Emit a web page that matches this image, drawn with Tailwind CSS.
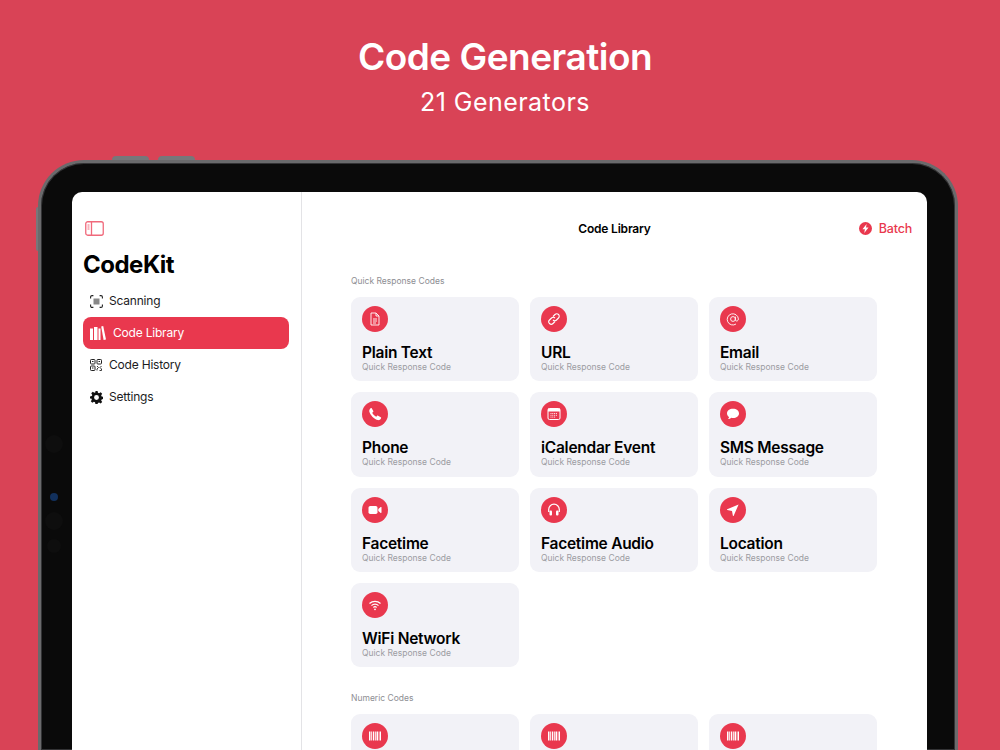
<!DOCTYPE html>
<html lang="en">
  <head>
    <meta charset="UTF-8" />
    <meta name="viewport" content="width=device-width, initial-scale=1.0" />
    <title>CodeKit - Code Generation</title>
    <script src="https://cdn.jsdelivr.net/npm/@tailwindcss/browser@4"></script>
  </head>
  <body class="w-[1000px] h-[750px] overflow-hidden bg-[#d94356] font-['Inter',sans-serif] text-black">
    <!-- heading -->
    <header class="h-[160px] pl-[10px] pt-[33px] text-center text-white">
      <h1 class="text-[37px] leading-[48px] font-semibold tracking-[-0.5px]">Code Generation</h1>
      <p class="mt-[6px] text-[25px] leading-[30px] tracking-[0.45px]">21 Generators</p>
    </header>

    <!-- device -->
    <div class="relative ml-[38px] w-[920px] h-[590px] rounded-t-[46px] bg-[#0a0a0a] border-t-[3px] border-x-[3px] border-[#6a6a6c] shadow-[inset_0_0_0_1px_#333335] pl-[31px] pr-[28px] pt-[29px]">
      <div class="absolute left-[71px] top-[-7px] w-[37px] h-[4px] rounded-t-sm bg-[#77777a]"></div>
      <div class="absolute left-[117px] top-[-7px] w-[37px] h-[4px] rounded-t-sm bg-[#77777a]"></div>
      <div class="absolute left-[-5px] top-[44px] w-[2px] h-[44px] rounded-l-sm bg-[#77777a]"></div>
      <div class="absolute left-[4px] top-[272px] w-[18px] h-[18px] rounded-full bg-[#0e0e0e]"></div>
      <div class="absolute left-[9px] top-[330px] w-[8px] h-[8px] rounded-full bg-[#12305c]"></div>
      <div class="absolute left-[4px] top-[349px] w-[18px] h-[18px] rounded-full bg-[#0e0e0e]"></div>
      <div class="absolute left-[6px] top-[376px] w-[14px] h-[14px] rounded-full bg-[#0e0e0e]"></div>

      <!-- screen -->
      <div class="flex h-[558px] rounded-t-[10px] overflow-hidden bg-white">
        <aside class="w-[230px] shrink-0 border-r border-[#e3e3e6] px-[11px] pt-[29px]">
          <svg class="ml-[2px] w-[19px] h-[15px] text-[#f0697b]" viewBox="0 0 19 15" fill="none" stroke="currentColor">
            <rect x="0.75" y="0.75" width="17.5" height="13.5" rx="2" stroke-width="1.3" />
            <path d="M6.5 1v13" stroke-width="1.3" />
            <path d="M2.5 4h2M2.5 6h2M2.5 8h2" stroke-width="1" />
          </svg>
          <h2 class="mt-[12px] text-[24px] leading-[34px] font-bold tracking-[-0.5px]">CodeKit</h2>
          <nav class="mt-[3px] w-[206px] text-[12px] tracking-[-0.2px] text-[#1c1c1e]">
            <a class="flex items-center h-[32px] pl-[7px] gap-[6px]">
              <svg class="w-[13px] h-[13px]" viewBox="0 0 13 13" fill="none" stroke="#222" stroke-width="1.1">
                <path d="M.6 3.4V2A1.4 1.4 0 0 1 2 .6h1.4M9.6.6H11A1.4 1.4 0 0 1 12.4 2v1.4M12.4 9.6V11A1.4 1.4 0 0 1 11 12.4H9.6M3.4 12.4H2A1.4 1.4 0 0 1 .6 11V9.6" />
                <rect x="3.5" y="3.5" width="6" height="6" fill="#888" stroke="none" />
              </svg>
              <span>Scanning</span>
            </a>
            <a class="flex items-center h-[32px] pl-[7px] gap-[7px] rounded-lg bg-[#e9384e] text-white">
              <svg class="w-[16px] h-[14px]" viewBox="0 0 16 14" fill="#fff">
                <rect x="0" y="2.5" width="3" height="11.5" />
                <rect x="4" y="1" width="3.5" height="13" />
                <rect x="8.5" y="2.5" width="2" height="11.5" />
                <path d="M11.2.6l2-.6L16 13.4l-2.400.6z" />
              </svg>
              <span>Code Library</span>
            </a>
            <a class="flex items-center h-[32px] pl-[7px] gap-[7px]">
              <svg class="w-[12px] h-[12px]" viewBox="0 0 12 12" fill="none" stroke="#222">
                <rect x=".5" y=".5" width="4.5" height="4.5" rx=".8" />
                <rect x="7" y=".5" width="4.5" height="4.5" rx=".8" />
                <rect x=".5" y="7" width="4.5" height="4.5" rx=".8" />
                <path d="M2 2.500h1.500M8.500 2.500H10M2 9h1.500" stroke-width="1.2" />
                <path d="M7 7l1.500 1.500L7 10v1.500M11.500 7L10 8.500l1.500 1.500v1.500H9.500" stroke-width=".9" />
              </svg>
              <span>Code History</span>
            </a>
            <a class="flex items-center h-[32px] pl-[7px] gap-[6px]">
              <svg class="w-[13px] h-[13px]" viewBox="0 0 24 24" fill="#111">
                <path fill-rule="evenodd" d="M10 0h4l.7 3.300 2.100.9L19.700 2.300l2.800 2.800-1.900 2.900.9 2.100 3.300.7v4l-3.300.7-.9 2.100 1.900 2.900-2.800 2.800-2.900-1.900-2.100.9L14 24h-4l-.7-3.300-2.100-.9-2.900 1.900-2.800-2.800 1.900-2.900-.9-2.100L0 14v-4l3.300-.7.9-2.100-1.900-2.900 2.800-2.800 2.900 1.900 2.100-.9zM12 7.500a4.500 4.500 0 1 0 0 9 4.500 4.500 0 0 0 0-9z" />
              </svg>
              <span>Settings</span>
            </a>
          </nav>
        </aside>

        <main class="flex-1 min-w-0">
          <div class="relative flex items-center justify-end h-[73px] pr-[15px]">
            <h3 class="absolute inset-x-0 text-center text-[12px] font-semibold tracking-[-0.2px]">Code Library</h3>
            <button class="relative flex items-center gap-[7px] text-[12.5px] leading-[16px] font-medium tracking-[-0.2px] text-[#e9384e]">
              <svg class="w-[13px] h-[13px]" viewBox="0 0 13 13">
                <circle cx="6.5" cy="6.5" r="6.5" fill="#e9384e" />
                <path d="M7.6 2L3.5 7.300h2.400L5.300 11l4.200-5.400H7z" fill="#fff" />
              </svg>
              <span>Batch</span>
            </button>
          </div>

          <div class="pl-[49px] pr-[50px] pt-[9px]">
            <p class="h-[14px] text-[8.5px] leading-[14px] text-[#8e8e93]">Quick Response Codes</p>
            <div class="mt-[9.3px] grid grid-cols-3 gap-[11px]">
              <div class="h-[84.17px] rounded-[9px] bg-[#f2f2f7] px-[11px] pt-[9px]">
                <div class="flex items-center justify-center w-[26px] h-[26px] rounded-full bg-[#e9384e]">
                  <svg class="w-[14px] h-[14px]" viewBox="0 0 14 14" fill="none" stroke="#fff" stroke-width=".9">
                    <path d="M3 1h5l3 3v9H3zM8 1v3h3M5 7h4M5 9h4M5 11h3" />
                  </svg>
                </div>
                <p class="mt-[11px] text-[15.5px] leading-[19px] font-semibold tracking-[-0.26px]">Plain Text</p>
                <p class="text-[8.5px] leading-[10px] text-[#9c9ca2]">Quick Response Code</p>
              </div>
              <div class="h-[84.17px] rounded-[9px] bg-[#f2f2f7] px-[11px] pt-[9px]">
                <div class="flex items-center justify-center w-[26px] h-[26px] rounded-full bg-[#e9384e]">
                  <svg class="w-[14px] h-[14px]" viewBox="0 0 14 14" fill="none" stroke="#fff" stroke-width="1.1">
                    <path d="M6 4.500l2-2a2.400 2.400 0 0 1 3.500 3.500l-2 2a2.400 2.400 0 0 1-3.500 0" />
                    <path d="M8 9.500l-2 2A2.400 2.400 0 0 1 2.500 8l2-2a2.400 2.400 0 0 1 3.500 0" />
                  </svg>
                </div>
                <p class="mt-[11px] text-[15.5px] leading-[19px] font-semibold tracking-[-0.26px]">URL</p>
                <p class="text-[8.5px] leading-[10px] text-[#9c9ca2]">Quick Response Code</p>
              </div>
              <div class="h-[84.17px] rounded-[9px] bg-[#f2f2f7] px-[11px] pt-[9px]">
                <div class="flex items-center justify-center w-[26px] h-[26px] rounded-full bg-[#e9384e]">
                  <svg class="w-[14px] h-[14px]" viewBox="0 0 14 14" fill="none" stroke="#fff" stroke-width=".9">
                    <circle cx="7" cy="7" r="2.4" />
                    <path d="M9.4 4.600v3.300c0 1.600 3 1.600 3-1A5.600 5.600 0 1 0 10 12" />
                  </svg>
                </div>
                <p class="mt-[11px] text-[15.5px] leading-[19px] font-semibold tracking-[-0.26px]">Email</p>
                <p class="text-[8.5px] leading-[10px] text-[#9c9ca2]">Quick Response Code</p>
              </div>

              <div class="h-[84.17px] rounded-[9px] bg-[#f2f2f7] px-[11px] pt-[9px]">
                <div class="flex items-center justify-center w-[26px] h-[26px] rounded-full bg-[#e9384e]">
                  <svg class="w-[14px] h-[14px]" viewBox="0 0 14 14" fill="#fff">
                    <path d="M3.700 1.200L5.300 3.900c.2.400.1.800-.2 1.100l-.9.800c.7 1.500 2.500 3.300 4 4l.8-.9c.3-.3.700-.4 1.100-.2l2.700 1.600c.4.300.5.800.2 1.200-.8 1.200-1.800 1.800-3 1.600C6.500 12.500 2 8 1.300 4.500c-.2-1.200.3-2.400 1.300-3.300.4-.3.800-.3 1.100 0z" />
                  </svg>
                </div>
                <p class="mt-[11px] text-[15.5px] leading-[19px] font-semibold tracking-[-0.26px]">Phone</p>
                <p class="text-[8.5px] leading-[10px] text-[#9c9ca2]">Quick Response Code</p>
              </div>
              <div class="h-[84.17px] rounded-[9px] bg-[#f2f2f7] px-[11px] pt-[9px]">
                <div class="flex items-center justify-center w-[26px] h-[26px] rounded-full bg-[#e9384e]">
                  <svg class="w-[14px] h-[14px]" viewBox="0 0 14 14" fill="none">
                    <rect x="1" y="1.5" width="12" height="11" rx="1.5" stroke="#fff" />
                    <rect x="1" y="1.5" width="12" height="3" fill="#fff" />
                    <path d="M3.500 6.500h7M3.500 8.300h7M3.500 10.100h5" stroke="#fff" stroke-width=".9" stroke-dasharray="1 .8" />
                  </svg>
                </div>
                <p class="mt-[11px] text-[15.5px] leading-[19px] font-semibold tracking-[-0.26px]">iCalendar Event</p>
                <p class="text-[8.5px] leading-[10px] text-[#9c9ca2]">Quick Response Code</p>
              </div>
              <div class="h-[84.17px] rounded-[9px] bg-[#f2f2f7] px-[11px] pt-[9px]">
                <div class="flex items-center justify-center w-[26px] h-[26px] rounded-full bg-[#e9384e]">
                  <svg class="w-[14px] h-[14px]" viewBox="0 0 14 14" fill="#fff">
                    <path d="M7 1.800c3.500 0 6 2 6 4.600S10.500 11 7 11c-.6 0-1.200-.1-1.700-.2-.8.7-2 1.200-3.300 1.300.6-.6 1-1.400 1.100-2.100C1.900 9.200 1 7.900 1 6.400 1 3.800 3.500 1.800 7 1.800z" />
                  </svg>
                </div>
                <p class="mt-[11px] text-[15.5px] leading-[19px] font-semibold tracking-[-0.26px]">SMS Message</p>
                <p class="text-[8.5px] leading-[10px] text-[#9c9ca2]">Quick Response Code</p>
              </div>

              <div class="h-[84.17px] rounded-[9px] bg-[#f2f2f7] px-[11px] pt-[9px]">
                <div class="flex items-center justify-center w-[26px] h-[26px] rounded-full bg-[#e9384e]">
                  <svg class="w-[14px] h-[14px]" viewBox="0 0 14 14" fill="#fff">
                    <rect x=".5" y="3" width="9" height="8" rx="1.8" />
                    <path d="M10.300 6l2.400-2c.3-.2.800 0 .8.400v5.200c0 .4-.5.600-.8.400l-2.400-2z" />
                  </svg>
                </div>
                <p class="mt-[11px] text-[15.5px] leading-[19px] font-semibold tracking-[-0.26px]">Facetime</p>
                <p class="text-[8.5px] leading-[10px] text-[#9c9ca2]">Quick Response Code</p>
              </div>
              <div class="h-[84.17px] rounded-[9px] bg-[#f2f2f7] px-[11px] pt-[9px]">
                <div class="flex items-center justify-center w-[26px] h-[26px] rounded-full bg-[#e9384e]">
                  <svg class="w-[14px] h-[14px]" viewBox="0 0 14 14" fill="none">
                    <path d="M1.700 9V6.500a5.300 5.300 0 0 1 10.600 0V9" stroke="#fff" stroke-width="1.2" />
                    <rect x="2.5" y="7.500" width="2.500" height="5" rx="1" fill="#fff" />
                    <rect x="9" y="7.500" width="2.500" height="5" rx="1" fill="#fff" />
                  </svg>
                </div>
                <p class="mt-[11px] text-[15.5px] leading-[19px] font-semibold tracking-[-0.26px]">Facetime Audio</p>
                <p class="text-[8.5px] leading-[10px] text-[#9c9ca2]">Quick Response Code</p>
              </div>
              <div class="h-[84.17px] rounded-[9px] bg-[#f2f2f7] px-[11px] pt-[9px]">
                <div class="flex items-center justify-center w-[26px] h-[26px] rounded-full bg-[#e9384e]">
                  <svg class="w-[14px] h-[14px]" viewBox="0 0 14 14" fill="#fff">
                    <path d="M12.600 1.400L7.700 12.800c-.2.400-.7.300-.8-.1L6 8 1.300 7.100c-.4-.1-.5-.6-.1-.8z" />
                  </svg>
                </div>
                <p class="mt-[11px] text-[15.5px] leading-[19px] font-semibold tracking-[-0.26px]">Location</p>
                <p class="text-[8.5px] leading-[10px] text-[#9c9ca2]">Quick Response Code</p>
              </div>

              <div class="h-[84.17px] rounded-[9px] bg-[#f2f2f7] px-[11px] pt-[9px]">
                <div class="flex items-center justify-center w-[26px] h-[26px] rounded-full bg-[#e9384e]">
                  <svg class="w-[14px] h-[14px]" viewBox="0 0 14 14" fill="none" stroke="#fff" stroke-width="1.2">
                    <path d="M1.500 5.500a8 8 0 0 1 11 0M3.500 7.600a5 5 0 0 1 7 0M5.400 9.500a2.300 2.300 0 0 1 3.200 0" />
                    <circle cx="7" cy="11.300" r=".9" fill="#fff" stroke="none" />
                  </svg>
                </div>
                <p class="mt-[11px] text-[15.5px] leading-[19px] font-semibold tracking-[-0.26px]">WiFi Network</p>
                <p class="text-[8.5px] leading-[10px] text-[#9c9ca2]">Quick Response Code</p>
              </div>
            </div>

            <p class="mt-[24px] h-[14px] text-[8.5px] leading-[14px] text-[#8e8e93]">Numeric Codes</p>
            <div class="mt-[9px] grid grid-cols-3 gap-x-[11px]">
              <div class="h-[84.17px] rounded-[9px] bg-[#f2f2f7] px-[11px] pt-[9px]">
                <div class="flex items-center justify-center w-[26px] h-[26px] rounded-full bg-[#e9384e]">
                  <svg class="w-[14px] h-[14px]" viewBox="0 0 14 14" fill="#fff">
                    <path d="M1 2.500h1.500v9H1zM3.200 2.500h.8v9h-.8zM4.800 2.500h1.500v9H4.800zM7 2.500h.8v9H7zM8.500 2.500H10v9H8.500zM10.700 2.500h.8v9h-.8zM12 2.500h1v9h-1z" />
                  </svg>
                </div>
              </div>
              <div class="h-[84.17px] rounded-[9px] bg-[#f2f2f7] px-[11px] pt-[9px]">
                <div class="flex items-center justify-center w-[26px] h-[26px] rounded-full bg-[#e9384e]">
                  <svg class="w-[14px] h-[14px]" viewBox="0 0 14 14" fill="#fff">
                    <path d="M1 2.500h1.500v9H1zM3.200 2.500h.8v9h-.8zM4.800 2.500h1.500v9H4.800zM7 2.500h.8v9H7zM8.500 2.500H10v9H8.500zM10.700 2.500h.8v9h-.8zM12 2.500h1v9h-1z" />
                  </svg>
                </div>
              </div>
              <div class="h-[84.17px] rounded-[9px] bg-[#f2f2f7] px-[11px] pt-[9px]">
                <div class="flex items-center justify-center w-[26px] h-[26px] rounded-full bg-[#e9384e]">
                  <svg class="w-[14px] h-[14px]" viewBox="0 0 14 14" fill="#fff">
                    <path d="M1 2.500h1.500v9H1zM3.200 2.500h.8v9h-.8zM4.800 2.500h1.500v9H4.800zM7 2.500h.8v9H7zM8.500 2.500H10v9H8.500zM10.700 2.500h.8v9h-.8zM12 2.500h1v9h-1z" />
                  </svg>
                </div>
              </div>
            </div>
          </div>
        </main>
      </div>
    </div>
  </body>
</html>
